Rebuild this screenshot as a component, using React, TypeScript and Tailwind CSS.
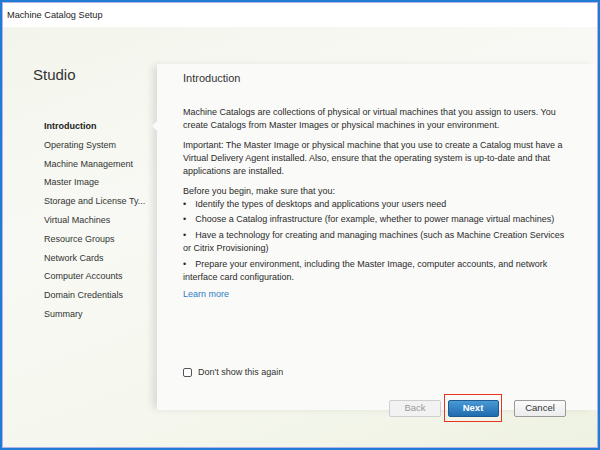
import React from 'react';

const steps = [
  'Introduction',
  'Operating System',
  'Machine Management',
  'Master Image',
  'Storage and License Ty...',
  'Virtual Machines',
  'Resource Groups',
  'Network Cards',
  'Computer Accounts',
  'Domain Credentials',
  'Summary',
];

const bullets = [
  'Identify the types of desktops and applications your users need',
  'Choose a Catalog infrastructure (for example, whether to power manage virtual machines)',
  'Have a technology for creating and managing machines (such as Machine Creation Services or Citrix Provisioning)',
  'Prepare your environment, including the Master Image, computer accounts, and network interface card configuration.',
];

export default function App() {
  return (
    <div
      className="w-[600px] h-[450px] border-[2px] border-[#1f7bd3] bg-[#1f7bd3] text-[#2b2b2b]"
      style={{ fontFamily: '"Liberation Sans", Arial, sans-serif' }}
    >
      <div className="h-full flex flex-col border border-[#b4b4e6]">
        {/* title bar */}
        <div className="h-[24px] bg-white flex items-center pl-[4px] pt-[2px] text-[9.2px] text-[#222]">
          Machine Catalog Setup
        </div>

        {/* body */}
        <div className="flex-1 flex flex-col bg-[linear-gradient(160deg,#f3f5ec_0%,#f8f9f4_35%,#f5f7ee_70%,#eef2e1_100%)]">
          <div className="flex pt-[37px] h-[383px]">
            {/* sidebar */}
            <div className="w-[154px] shrink-0">
              <div className="pl-[30px] text-[15px] leading-[20px] text-[#333] mt-[1px]">Studio</div>
              <ul className="pl-[41px] mt-[32px] text-[9px]">
                {steps.map((s, i) => (
                  <li
                    key={s}
                    className={
                      'h-[18.8px] leading-[18.8px] whitespace-nowrap ' +
                      (i === 0 ? 'font-bold text-[#222]' : 'text-[#333]')
                    }
                  >
                    {s}
                  </li>
                ))}
              </ul>
            </div>

            {/* content panel */}
            <div className="relative flex-1 flex flex-col bg-[#fafaf8] shadow-[-6px_0_8px_-2px_rgba(0,0,0,0.12)] pl-[26px] pr-[28px] pt-[7px]">
              <div className="absolute left-[-5px] top-[57px] w-0 h-0 border-y-[5px] border-y-transparent border-r-[5px] border-r-[#fafaf8]" />
              <div className="text-[11px] leading-[14px] text-[#333]">Introduction</div>
              <div className="mt-[21px] text-[9px] leading-[13px] text-[#2b2b2b]">
                <p>
                  Machine Catalogs are collections of physical or virtual machines that you assign to users. You
                  create Catalogs from Master Images or physical machines in your environment.
                </p>
                <p className="mt-[7px]">
                  Important: The Master Image or physical machine that you use to create a Catalog must have a
                  Virtual Delivery Agent installed. Also, ensure that the operating system is up-to-date and that
                  applications are installed.
                </p>
                <p className="mt-[7px]">Before you begin, make sure that you:</p>
                <ul>
                  {bullets.map((b, i) => (
                    <li key={i} className={i === 0 ? 'leading-[12px]' : 'mt-[3px]'}>
                      {'•\u2002\u2002' + b}
                    </li>
                  ))}
                </ul>
                <a className="block mt-[4px] text-[#2f7cc6]">Learn more</a>
              </div>

              <label className="mt-auto mb-[31px] flex items-center gap-[6px] text-[9px] text-[#333]">
                <span className="w-[9px] h-[9px] border border-[#555] rounded-[2px] bg-white" />
                Don't show this again
              </label>
            </div>
          </div>

          {/* buttons */}
          <div className="relative -mt-[16px] flex justify-end items-center pr-[31px]">
            <button className="w-[52px] h-[17px] mr-[3px] border border-[#cfcfcf] rounded-[2px] bg-[#f2f2f2] text-[9.5px] text-[#9a9a9a]">
              Back
            </button>
            <div className="mr-[12px] px-[2.5px] pt-[5px] pb-[4px] border-[1.5px] border-[#e8341c]">
              <button className="block w-[51px] h-[17px] border border-[#1d5a8f] rounded-[2px] bg-[linear-gradient(#4a9ad6,#1f6bae)] text-[9.5px] font-bold text-white">
                Next
              </button>
            </div>
            <button className="w-[52px] h-[17px] border border-[#9a9a9a] rounded-[2px] bg-[linear-gradient(#fbfbfb,#ececec)] text-[9.5px] text-[#333]">
              Cancel
            </button>
          </div>
        </div>
      </div>
    </div>
  );
}
